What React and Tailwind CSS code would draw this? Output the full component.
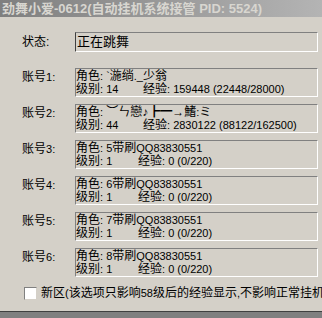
import React from 'react';

const accounts = [
  { role: '`湤绱._少翁', level: '14', exp: '159448 (22448/28000)' },
  { role: '︶ㄣ戀♪┣━→鰭:ミ', level: '44', exp: '2830122 (88122/162500)' },
  { role: '5带刷QQ83830551', level: '1', exp: '0 (0/220)' },
  { role: '6带刷QQ83830551', level: '1', exp: '0 (0/220)' },
  { role: '7带刷QQ83830551', level: '1', exp: '0 (0/220)' },
  { role: '8带刷QQ83830551', level: '1', exp: '0 (0/220)' },
];

// Latin runs in the narrower Tahoma-like size, CJK at 12px
function Mixed({ text }) {
  const parts = text.split(/([\u0020-\u007e]+)/).filter(Boolean);
  return parts.map((p, i) =>
    /^[\u0020-\u007e]+$/.test(p) ? (
      <span key={i} className="text-[11px]">{p}</span>
    ) : (
      <span key={i}>{p}</span>
    )
  );
}

export default function App() {
  return (
    <div
      className="w-[322px] h-[318px] bg-[#d4d0c8] flex flex-col overflow-hidden text-black"
      style={{ fontFamily: '"Liberation Sans", "Noto Sans CJK SC", sans-serif' }}
    >
      {/* Title bar */}
      <div className="h-[17px] bg-gradient-to-r from-[#7f7f7f] to-[#b4b4b4] flex items-center pl-[2px]">
        <span className="text-[13px] leading-[17px] font-bold text-[#d8d6d0] whitespace-nowrap">
          劲舞小爱-0612(自动挂机系统接管 PID: 5524)
        </span>
      </div>

      {/* Status */}
      <div className="flex items-start mt-[15px]">
        <div className="w-[75px] pl-[22px] pt-[4px] text-[12px] leading-[13px]">状态:</div>
        <div className="w-[243px] h-[20px] border-t border-l border-t-[#808080] border-l-[#404040] border-b border-r border-b-white border-r-white pl-[1px] text-[13px] leading-[18px]">
          正在跳舞
        </div>
      </div>

      {/* Accounts */}
      <div className="flex flex-col gap-[7px] mt-[16px]">
        {accounts.map((a, i) => (
          <div key={i} className="flex items-start">
            <div className="w-[75px] pl-[22px] pt-[3px] text-[12px] leading-[13px]">
              <Mixed text={`账号${i + 1}:`} />
            </div>
            <div className="w-[243px] h-[29px] border-t border-l border-t-[#808080] border-l-[#808080] border-b border-r border-b-white border-r-white pt-[1px] text-[12px] leading-[13px] whitespace-nowrap overflow-hidden">
              <div className="h-[13px]">
                <Mixed text={`角色: ${a.role}`} />
              </div>
              <div className="flex h-[13px]">
                <span className={a.level.length > 1 ? 'w-[67px] shrink-0' : 'w-[62px] shrink-0'}>
                  <Mixed text={`级别: ${a.level}`} />
                </span>
                <span>
                  <Mixed text={`经验: ${a.exp}`} />
                </span>
              </div>
            </div>
          </div>
        ))}
      </div>

      {/* Checkbox */}
      <div className="flex items-center mt-[10px] pl-[24px] whitespace-nowrap">
        <div className="w-[13px] h-[13px] bg-white border-t border-l border-t-[#808080] border-l-[#808080] border-b border-r border-b-[#d4d0c8] border-r-[#d4d0c8] shrink-0" />
        <span className="ml-[4px] text-[12px] leading-[13px]">
          <Mixed text="新区(该选项只影响58级后的经验显示,不影响正常挂机" />
        </span>
      </div>

      <div className="flex-1" />
      <div className="h-[7px] border-t border-t-[#404040] bg-[#808080]" />
    </div>
  );
}
